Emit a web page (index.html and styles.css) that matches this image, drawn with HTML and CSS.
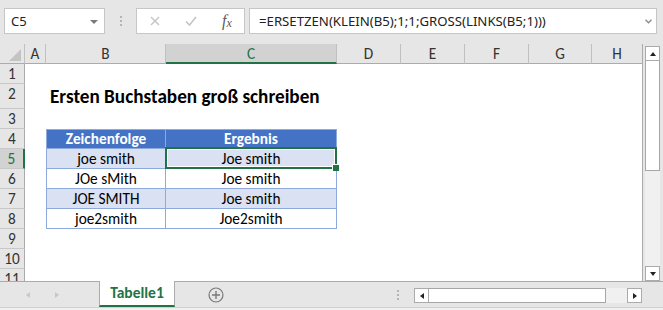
FILE: index.html
```html
<!DOCTYPE html>
<html lang="de">
<head>
    <meta charset="UTF-8">
    <meta name="viewport" content="width=device-width, initial-scale=1.0">
    <title>Ersten Buchstaben groß schreiben</title>
    <link rel="stylesheet" href="styles.css">
</head>
<body>
    <div class="formula-bar">
        <div class="name-box">
            <span>C5</span>
            <span class="caret"></span>
        </div>
        <div class="grip"><i></i><i></i><i></i></div>
        <div class="fx-buttons">
            <svg class="icon-x" width="10" height="10" viewBox="0 0 10 10">
                <path d="M1 1 L9 9 M9 1 L1 9" stroke="#c4c4c4" stroke-width="1.4" fill="none"/>
            </svg>
            <svg class="icon-check" width="12" height="10" viewBox="0 0 12 10">
                <path d="M1 5.5 L4.5 9 L11 1" stroke="#c4c4c4" stroke-width="1.6" fill="none"/>
            </svg>
            <span class="fx">f<span class="fx-x">x</span></span>
        </div>
        <div class="formula">
            <span>=ERSETZEN(KLEIN(B5);1;1;GROSS(LINKS(B5;1)))</span>
            <svg class="chevron" width="7" height="5" viewBox="0 0 7 5">
                <path d="M0.5 0.8 L3.5 3.8 L6.5 0.8" stroke="#8a8a8a" stroke-width="1.3" fill="none"/>
            </svg>
        </div>
    </div>

    <div class="sheet">
        <div class="grid">
            <div class="row heads">
                <div class="corner">
                    <svg width="12" height="12" viewBox="0 0 12 12"><path d="M12 0 L12 12 L0 12 Z" fill="#c3c3c3"/></svg>
                </div>
                <div class="ch col-a">A</div>
                <div class="ch col-b">B</div>
                <div class="ch col-c active">C</div>
                <div class="ch col-d">D</div>
                <div class="ch col-e">E</div>
                <div class="ch col-f">F</div>
                <div class="ch col-g">G</div>
                <div class="ch col-h">H</div>
            </div>

            <div class="row"><div class="rh">1</div></div>
            <div class="row tall">
                <div class="rh">2</div>
                <div class="col-a"></div>
                <div class="title">Ersten Buchstaben groß schreiben</div>
            </div>
            <div class="row"><div class="rh">3</div></div>
            <div class="row">
                <div class="rh">4</div>
                <div class="col-a"></div>
                <div class="cell col-b first head">Zeichenfolge</div>
                <div class="cell col-c head">Ergebnis</div>
            </div>
            <div class="row">
                <div class="rh active">5</div>
                <div class="col-a"></div>
                <div class="cell col-b first band">joe smith</div>
                <div class="cell col-c band selected">Joe smith<span class="handle"></span></div>
            </div>
            <div class="row">
                <div class="rh">6</div>
                <div class="col-a"></div>
                <div class="cell col-b first">JOe sMith</div>
                <div class="cell col-c">Joe smith</div>
            </div>
            <div class="row">
                <div class="rh">7</div>
                <div class="col-a"></div>
                <div class="cell col-b first band">JOE SMITH</div>
                <div class="cell col-c band">Joe smith</div>
            </div>
            <div class="row">
                <div class="rh">8</div>
                <div class="col-a"></div>
                <div class="cell col-b first">joe2smith</div>
                <div class="cell col-c">Joe2smith</div>
            </div>
            <div class="row"><div class="rh">9</div></div>
            <div class="row"><div class="rh">10</div></div>
            <div class="row"><div class="rh">11</div></div>
        </div>

        <div class="vscroll">
            <div class="vtrack">
                <div class="sbtn"><span class="tri-up"></span></div>
                <div class="vthumb"></div>
                <div class="spacer"></div>
                <div class="sbtn"><span class="tri-down"></span></div>
            </div>
        </div>
    </div>

    <div class="tabs">
        <div class="tab-nav">
            <span class="nav-left"></span>
            <span class="nav-right"></span>
        </div>
        <div class="sheet-tab">Tabelle1</div>
        <svg class="add-sheet" width="16" height="16" viewBox="0 0 16 16">
            <circle cx="8" cy="8" r="7" stroke="#7a7a7a" stroke-width="1.2" fill="none"/>
            <path d="M8 4 V12 M4 8 H12" stroke="#7a7a7a" stroke-width="1.4"/>
        </svg>
        <div class="hgrip"><i></i><i></i><i></i></div>
        <div class="hscroll">
            <div class="sbtn"><span class="tri-left"></span></div>
            <div class="hthumb"></div>
            <div class="htrack"></div>
            <div class="sbtn"><span class="tri-right"></span></div>
        </div>
    </div>
    <div class="status"></div>
</body>
</html>
```

FILE: styles.css
```css
* {
    margin: 0;
    padding: 0;
    box-sizing: border-box;
}

body {
    width: 663px;
    height: 310px;
    overflow: hidden;
    background-color: #e6e6e6;
    font-family: Carlito, Lato, 'Liberation Sans', sans-serif;
    color: #000;
}

/* formula bar */
.formula-bar {
    display: flex;
    height: 44px;
    padding-top: 8px;
}

.name-box,
.fx-buttons,
.formula {
    height: 26px;
    background-color: #fff;
    border: 1px solid #c6c6c6;
    display: flex;
    align-items: center;
}

.name-box {
    margin-left: 4px;
    width: 101px;
    padding: 0 6px;
    justify-content: space-between;
    font-family: 'Noto Sans', sans-serif;
    font-size: 13px;
    color: #222;
}

.caret {
    border-left: 4px solid transparent;
    border-right: 4px solid transparent;
    border-top: 4px solid #7a7a7a;
    margin-top: 1px;
}

.grip {
    width: 31px;
    display: flex;
    flex-direction: column;
    align-items: center;
    justify-content: center;
    gap: 2px;
    height: 26px;
}

.grip i,
.hgrip i {
    display: block;
    width: 2px;
    height: 2px;
    background-color: #b4b4b4;
}

.fx-buttons {
    width: 109px;
    padding-left: 13px;
}

.icon-check {
    margin-left: 25px;
}

.fx {
    margin-left: 25px;
    font-family: 'Liberation Serif', serif;
    font-style: italic;
    font-size: 16px;
    color: #5a5a5a;
    line-height: 1;
}

.fx-x {
    font-size: 12px;
    position: relative;
    top: 1px;
}

.formula {
    margin-left: 4px;
    width: 408px;
    padding: 0 4px 0 9px;
    font-family: 'Noto Sans', sans-serif;
    font-size: 13.2px;
    color: #222;
}

.chevron {
    margin-left: auto;
}

/* sheet */
.sheet {
    display: flex;
    height: 237px;
}

.grid {
    width: 643px;
    background-color: #fff;
    border-right: 1px solid #ababab;
    overflow: hidden;
}

.row {
    display: flex;
    height: 20px;
    font-size: 15.3px;
    line-height: 19px;
}

.row.tall {
    height: 25px;
}

.row.heads {
    background-color: #e6e6e6;
}

.corner {
    width: 25px;
    flex: none;
    border-right: 1px solid #c0c0c0;
    border-bottom: 1px solid #ababab;
    display: flex;
    align-items: flex-end;
    justify-content: flex-end;
    padding: 0 3px 2px 0;
}

.ch {
    flex: none;
    text-align: center;
    color: #333;
    border-right: 1px solid #c0c0c0;
    border-bottom: 1px solid #ababab;
}

.ch.active {
    background-color: #d2d2d2;
    color: #217346;
    border-bottom: 2px solid #217346;
}

.col-a { width: 21px; flex: none; }
.col-b { width: 120px; flex: none; }
.col-c { width: 171px; flex: none; }
.col-d { width: 64px; }
.col-e { width: 64px; }
.col-f { width: 64px; }
.col-g { width: 63px; }
.col-h { width: 50px; border-right: none; }

.rh {
    width: 25px;
    flex: none;
    background-color: #e6e6e6;
    border-right: 1px solid #ababab;
    border-bottom: 1px solid #c8c8c8;
    text-align: center;
    color: #333;
}

.rh.active {
    background-color: #d2d2d2;
    color: #217346;
    border-right: 2px solid #217346;
}

.title {
    padding-left: 4px;
    font-size: 19.2px;
    font-weight: bold;
    white-space: nowrap;
    line-height: 25px;
}

/* table */
.cell {
    text-align: center;
    border-right: 1px solid #8ea9db;
    border-bottom: 1px solid #8ea9db;
    white-space: nowrap;
}

.cell.first {
    border-left: 1px solid #8ea9db;
}

.cell.head {
    background-color: #4472c4;
    color: #fff;
    font-weight: bold;
    border-top: 1px solid #8ea9db;
    line-height: 18px;
}

.cell.band {
    background-color: #d9e1f2;
}

.cell.selected {
    position: relative;
}

.cell.selected::after {
    content: "";
    position: absolute;
    left: -1px;
    top: -2px;
    right: -1px;
    bottom: -1px;
    border: 2px solid #217346;
    box-shadow: inset 0 0 0 1px #fff;
}

.handle {
    position: absolute;
    right: -3px;
    bottom: -3px;
    width: 7px;
    height: 7px;
    background-color: #217346;
    border-left: 1px solid #fff;
    border-top: 1px solid #fff;
    z-index: 1;
}

/* scroll bars */
.vscroll {
    width: 20px;
    background-color: #e6e6e6;
}

.vtrack {
    margin: 2px 0 0 2px;
    width: 15px;
    height: 235px;
    display: flex;
    flex-direction: column;
    background-color: #f0f0f0;
}

.sbtn {
    width: 15px;
    height: 15px;
    flex: none;
    border: 1px solid #ababab;
    background-color: #fff;
    display: flex;
    align-items: center;
    justify-content: center;
}

.vthumb {
    height: 110px;
    border: 1px solid #a6a6a6;
    border-top: none;
    background-color: #fff;
}

.spacer {
    flex: 1;
}

.tri-up,
.tri-down {
    border-left: 3.5px solid transparent;
    border-right: 3.5px solid transparent;
}

.tri-up { border-bottom: 4px solid #222; }
.tri-down { border-top: 4px solid #222; }

.tri-left,
.tri-right,
.nav-left,
.nav-right {
    border-top: 3.5px solid transparent;
    border-bottom: 3.5px solid transparent;
}

.tri-left { border-right: 4px solid #222; }
.tri-right { border-left: 4px solid #222; }

/* sheet tabs */
.tabs {
    display: flex;
    height: 26px;
    border-top: 1px solid #ababab;
}

.tab-nav {
    width: 99px;
    display: flex;
    align-items: center;
    padding-left: 26px;
    gap: 25px;
}

.nav-left { border-right: 4px solid #c8c8c8; }
.nav-right { border-left: 4px solid #c8c8c8; }

.sheet-tab {
    width: 76px;
    margin-top: -1px;
    height: 26px;
    background-color: #fff;
    border-left: 1px solid #ababab;
    border-right: 1px solid #ababab;
    border-bottom: 2px solid #217346;
    text-align: center;
    font-size: 15.5px;
    font-weight: bold;
    line-height: 24px;
    color: #217346;
}

.add-sheet {
    margin: 5px 0 0 33px;
}

.hgrip {
    margin: 8px 0 0 173px;
    display: flex;
    flex-direction: column;
    gap: 2px;
}

.hscroll {
    margin: 6px 0 0 15px;
    width: 228px;
    height: 15px;
    display: flex;
    background-color: #f0f0f0;
}

.hthumb {
    width: 177px;
    border: 1px solid #a6a6a6;
    border-left: none;
    background-color: #fff;
}

.htrack {
    flex: 1;
}

.status {
    height: 4px;
    border-top: 1px solid #d0d0d0;
    background-color: #f0f0f0;
}
```
